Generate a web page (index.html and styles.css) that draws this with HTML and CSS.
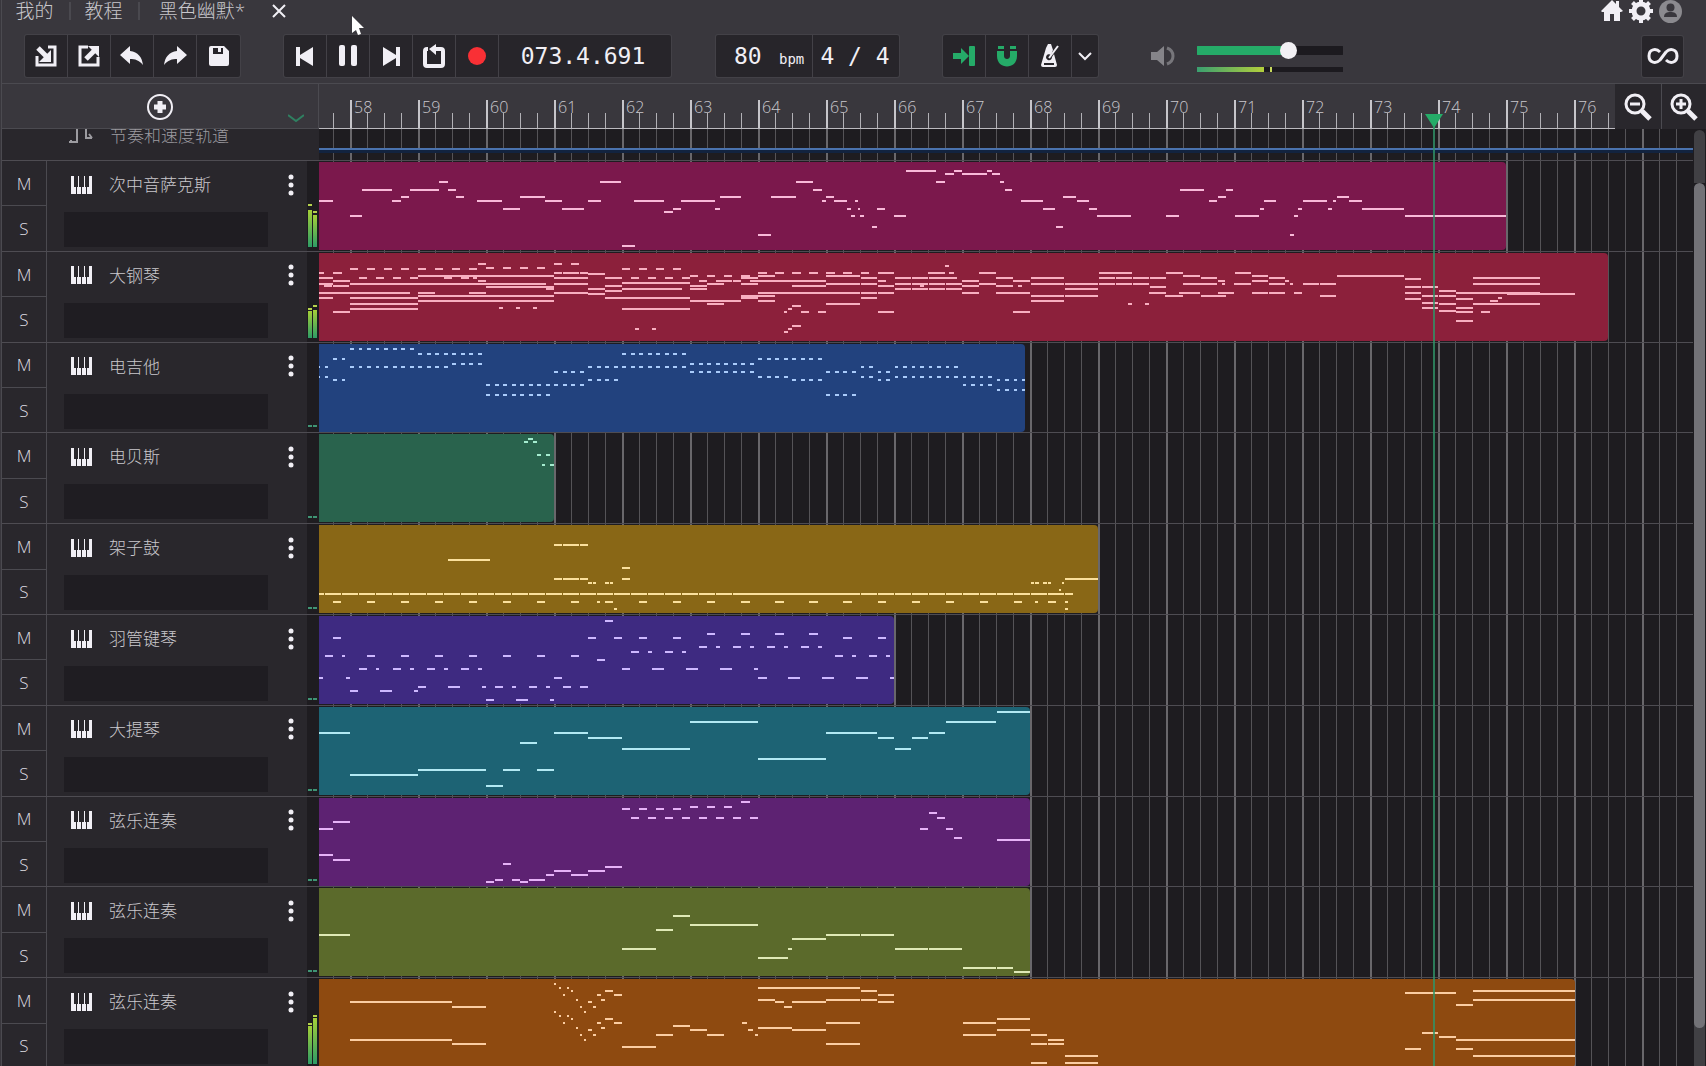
FILE: index.html
```html
<!DOCTYPE html>
<html lang="zh-CN">
<head>
<meta charset="utf-8">
<meta name="viewport" content="width=device-width, initial-scale=1">
<title>黑色幽默*</title>
<link rel="stylesheet" href="styles.css">
</head>
<body>
<header class="top">
  <nav class="tabs">
    <a class="tab" href="#mine">我的</a>
    <a class="tab" href="#learn">教程</a>
    <a class="tab tab-project" href="#project">黑色幽默*</a>
    <button class="close" type="button" aria-label="关闭">
      <svg width="14" height="14" viewBox="0 0 14 14"><path d="M1 1L13 13M13 1L1 13" class="line thin"/></svg>
    </button>
    <div class="account">
      <a class="plain" href="#home" aria-label="主页"><svg width="22" height="22" viewBox="0 0 22 22"><path class="fill" d="M11 0L15 4V1H18V7L22 11L20 12H19V21H13V14H9V21H3V12H1L0 11Z"/></svg></a>
      <a class="plain" href="#settings" aria-label="设置"><svg width="24" height="24" viewBox="0 0 24 24"><circle cx="12" cy="12" r="7" class="line gear"/><path class="line gear-teeth" d="M12 4V0M12 24V20M4 12H0M24 12H20M6 6L3.500 3.500M18 18L20.500 20.500M18 6L20.500 3.500M6 18L3.500 20.500"/></svg></a>
      <a class="plain" href="#me" aria-label="账户"><svg width="23" height="23" viewBox="0 0 23 23"><circle class="avatar-bg" cx="11.500" cy="11.500" r="11.500"/><circle class="avatar" cx="11.500" cy="7.500" r="4"/><path class="avatar" d="M5 17C5 13 8 12 11.500 12S18 13 18 17Z"/></svg></a>
    </div>
  </nav>

  <div class="toolbar">
    <div class="group files">
      <button type="button" aria-label="导入"><svg width="22" height="22" viewBox="0 0 22 22"><path class="line" d="M13 2H20V20H2V11"/><path class="line bold" d="M3 3L12 12"/><path class="fill" d="M16 5V17H4Z"/></svg></button>
      <button type="button" aria-label="导出"><svg width="22" height="22" viewBox="0 0 22 22"><path class="line" d="M10 2H2V20H20V12"/><path class="line bold" d="M8 14L16 6"/><path class="fill" d="M10 1H21V12Z"/></svg></button>
      <button type="button" aria-label="撤销"><svg width="24" height="20" viewBox="0 0 24 20"><path class="fill" d="M0 9L10 0V5C18 6 22 11 23 19C19 14 15 13 10 13V18Z"/></svg></button>
      <button type="button" aria-label="重做"><svg width="24" height="20" viewBox="0 0 24 20"><path class="fill" d="M24 9L14 0V5C6 6 2 11 1 19C5 14 9 13 14 13V18Z"/></svg></button>
      <button type="button" aria-label="保存"><svg width="20" height="20" viewBox="0 0 20 20"><path class="fill" fill-rule="evenodd" d="M2 0H15L20 5V18Q20 20 18 20H2Q0 20 0 18V2Q0 0 2 0ZM4 2V8H14V2H12V6H9V2Z"/></svg></button>
    </div>

    <div class="group transport">
      <button type="button" aria-label="回到开头"><svg width="18" height="19" viewBox="0 0 18 19"><path class="fill" d="M0 0H4V8L17 0V19L4 11V19H0Z"/></svg></button>
      <button type="button" aria-label="暂停"><svg width="18" height="22" viewBox="0 0 18 22"><rect class="fill" width="6" height="21" rx="2"/><rect class="fill" x="12" width="6" height="21" rx="2"/></svg></button>
      <button type="button" aria-label="跳到结尾"><svg width="18" height="19" viewBox="0 0 18 19"><path class="fill" d="M18 0H14V8L1 0V19L14 11V19H18Z"/></svg></button>
      <button type="button" aria-label="循环"><svg width="22" height="24" viewBox="0 0 22 24"><path class="line loop" d="M5 5H4Q2 5 2 7V20Q2 22 4 22H18Q20 22 20 20V7Q20 5 18 5H11"/><path class="fill" d="M6 5L13 0V11Z"/></svg></button>
      <button type="button" aria-label="录音"><svg width="20" height="20" viewBox="0 0 20 20"><circle class="record" cx="10" cy="10" r="9"/></svg></button>
      <output class="position">073.4.691</output>
    </div>

    <div class="group tempo">
      <label class="bpm"><input type="text" value="80"><span>bpm</span></label>
      <button class="meter-sig" type="button">4 / 4</button>
    </div>

    <div class="group snap">
      <button class="on" type="button" aria-label="自动滚动"><svg width="22" height="22" viewBox="0 0 22 22"><path class="fill" d="M0 8H8V3L16 11L8 19V14H0Z"/><rect class="fill" x="16" y="1" width="6" height="20" rx="1"/></svg></button>
      <button class="on" type="button" aria-label="吸附"><svg width="20" height="22" viewBox="0 0 20 22"><path class="fill" d="M1 1H7V4H1ZM13 1H19V4H13ZM0 6H7V11C7 15 13 15 13 11V6H20V11C20 25 0 25 0 11Z"/></svg></button>
      <button type="button" aria-label="节拍器"><svg width="20" height="24" viewBox="0 0 20 24"><path class="fill" fill-rule="evenodd" d="M8 0H11L13 6L11 11A3 3 0 1 0 12 13L14 10L17 21Q17 23 15 23H3Q1 23 1 21L6 4ZM4 19V21H14V19Z"/><path class="line thin" d="M9 14L18 2"/></svg></button>
      <button class="narrow" type="button" aria-label="更多"><svg width="14" height="9" viewBox="0 0 14 9"><path class="line thin" d="M1 1L7 7L13 1"/></svg></button>
    </div>

    <div class="volume">
      <svg width="24" height="22" viewBox="0 0 24 22"><path class="speaker" d="M0 7H6L13 1V21L6 15H0Z"/><path class="speaker-wave" d="M16 3C24 6 24 16 16 19"/></svg>
      <div class="volume-bars">
        <input type="range" min="0" max="100" value="64" aria-label="音量">
        <div class="master"><i></i><b></b></div>
      </div>
    </div>

    <button class="infinity" type="button" aria-label="循环模式"><svg width="32" height="16" viewBox="0 0 32 16"><path class="line infinity-line" d="M13 12C9 16 2 15 2 8C2 1 9 0 13 4M19 4C23 0 30 1 30 8C30 15 23 16 19 12M13 12L19 4"/></svg></button>
  </div>
</header>

<main class="workspace">
  <div class="ruler-row">
    <div class="ruler-head">
      <button class="add" type="button" aria-label="添加轨道"><svg width="26" height="26" viewBox="0 0 26 26"><circle class="line thin" cx="13" cy="13" r="12"/><path class="line bold" d="M13 7V19M7 13H19"/></svg></button>
      <button class="fold" type="button" aria-label="折叠"><svg width="16" height="9" viewBox="0 0 16 9"><path d="M0 1L8 7L16 1"/></svg></button>
    </div>
    <ol class="ruler" id="ruler"></ol>
    <div class="zoom">
      <button type="button" aria-label="缩小"><svg width="28" height="28" viewBox="0 0 28 28"><circle class="line" cx="11" cy="11" r="9"/><path class="line" d="M6 11H16"/><path class="line bold" d="M18 18L26 26"/></svg></button>
      <button type="button" aria-label="放大"><svg width="28" height="28" viewBox="0 0 28 28"><circle class="line" cx="11" cy="11" r="9"/><path class="line" d="M6 11H16M11 6V16"/><path class="line bold" d="M18 18L26 26"/></svg></button>
    </div>
  </div>

  <div class="scroller">
    <div class="tracks">
      <div class="tempo-row">
        <div class="tempo-head">
          <svg width="26" height="22" viewBox="0 0 26 22"><path d="M1 19H9V2M3 17V19M18 2V15H24M21 11L24 15"/></svg>
          <span>节奏和速度轨道</span>
        </div>
        <div class="tempo-lane"><div class="tempo-line"></div></div>
      </div>
      <div class="rows" id="rows"></div>
    </div>
    <div class="scrollbar"><div class="thumb"></div></div>
  </div>

  <div class="playhead"></div>
</main>

<svg class="cursor" width="13" height="19" viewBox="0 0 13 19"><path d="M0 0V17L4 14L6 19L9 18L7 12H12Z"/></svg>
<script src="app.js"></script>
</body>
</html>
```
FILE: styles.css
```css
* { box-sizing: border-box; }

:root {
  --bar: 68px;
  --first-bar: 31px;
  --head: 317px;
  --chrome: #39373d;
  --panel: #29272c;
  --dark: #1e1c20;
  --edge: #4b4a50;
  --ink: #f1eff5;
  --green: #25ab68;
}

body {
  margin: 0;
  height: 100vh;
  padding-left: 1px;
  display: flex;
  flex-direction: column;
  overflow: hidden;
  background: var(--chrome);
  color: #c9c8cd;
  font-family: "Open Sans", "Noto Sans CJK SC", sans-serif;
  font-weight: 300;
}

button, input, output { font: inherit; color: inherit; }
button { border: 0; padding: 0; background: none; display: flex; align-items: center; justify-content: center; }
svg { display: block; flex: none; }

.fill { fill: currentColor; }
.line { fill: none; stroke: currentColor; stroke-width: 3; }
.line.thin { stroke-width: 2; }
.line.bold { stroke-width: 5; }
.line.gear { stroke-width: 5; }
.line.gear-teeth { stroke-width: 4; }
.line.loop { stroke-width: 4; }
.line.infinity-line { stroke-width: 3; stroke-linejoin: round; }
.record { fill: #f93035; }
.avatar-bg { fill: #8b8a8f; }
.avatar { fill: var(--chrome); }

/* Top bar */
.top { border-left: 1px solid var(--edge); border-bottom: 1px solid var(--edge); height: 84px; flex: none; }

.tabs { display: flex; align-items: center; height: 22px; font-size: 19px; line-height: 22px; }
.tab { color: inherit; text-decoration: none; width: 69px; text-align: center; }
.tab:not(.tab-project) { border-right: 2px solid #4a494f; line-height: 18px; padding-right: 2px; }
.tab-project { width: 124px; }
.close { width: 30px; height: 22px; color: var(--ink); }
.account { margin-left: auto; margin-right: 24px; display: flex; align-items: center; gap: 6px; height: 22px; color: var(--ink); }
.plain { color: inherit; }

.toolbar { display: flex; align-items: center; margin-top: 13px; padding: 0 23px; height: 42px; color: var(--ink); }
.group { display: flex; background: #27252a; border-radius: 2px; box-shadow: 0 0 0 1px #434147; }
.group > * { height: 42px; width: 43px; border-right: 1px solid #434147; }
.group > :last-child { border-right: 0; }
.transport { margin-left: 44px; }
.group .position { width: 172px; padding-right: 4px; text-align: center; }
.position, .bpm, .meter-sig { font-family: "DejaVu Sans Mono", monospace; font-size: 23px; line-height: 42px; font-weight: 400; }
.tempo { margin-left: 45px; }
.group .bpm { width: 97px; display: flex; padding-left: 18px; }
.bpm input { width: 36px; height: 42px; padding: 0; border: 0; background: none; outline: 0; }
.bpm span { font-size: 14px; line-height: 48px; margin-left: 9px; }
.group .meter-sig { width: 86px; padding-right: 2px; }
.snap { margin-left: 44px; }
.group .on { color: var(--green); }
.group .narrow { width: 26px; }

.volume { display: flex; align-items: center; gap: 22px; margin-left: 53px; }
.speaker { fill: #858489; }
.speaker-wave { fill: none; stroke: #77767b; stroke-width: 3; }
.volume-bars { width: 146px; display: flex; flex-direction: column; gap: 8px; padding-top: 2px; }
.volume input {
  appearance: none;
  margin: 0;
  width: 100%;
  height: 17px;
  background: linear-gradient(to right, #25ab68 63%, #1c1a1f 63%) center / 100% 9px no-repeat;
  border-radius: 5px;
}
.volume input::-webkit-slider-thumb { appearance: none; width: 17px; height: 17px; border-radius: 50%; background: #f2f0f4; }
.master { height: 5px; background: #1c1a1f; display: flex; gap: 6px; }
.master i { width: 46%; background: linear-gradient(to right, #3a9f70, #b3cf3c); }
.master b { width: 2px; background: #c6d85c; }
.infinity { margin-left: auto; width: 41px; height: 41px; background: #27252a; border-radius: 2px; box-shadow: 0 0 0 1px #434147; }

/* Ruler */
.workspace { flex: 1; min-height: 0; display: flex; flex-direction: column; position: relative; border-left: 1px solid var(--edge); }
.ruler-row { display: flex; height: 45px; flex: none; }
.ruler-head { width: var(--head); flex: none; display: flex; align-items: center; border-right: 1px solid var(--edge); border-bottom: 1px solid var(--edge); padding: 2px 14px 0 145px; justify-content: space-between; }
.add { color: var(--ink); }
.fold { align-self: flex-end; height: 20px; }
.fold path { fill: none; stroke: #2f8061; stroke-width: 2; }
.ruler { flex: 1; min-width: 0; margin: 0; padding: 0; list-style: none; display: flex; overflow: hidden; border-bottom: 1px solid #bbbabf; }
.ruler li {
  flex: none;
  width: var(--bar);
  padding: 14px 0 0 4px;
  font-size: 16px;
  line-height: 18px;
  background:
    linear-gradient(#c6c5ca, #c6c5ca) 0 100% / 2px 28px no-repeat,
    linear-gradient(#b2b1b6, #b2b1b6) 17px 100% / 1px 15px no-repeat,
    linear-gradient(#b2b1b6, #b2b1b6) 34px 100% / 1px 15px no-repeat,
    linear-gradient(#b2b1b6, #b2b1b6) 51px 100% / 1px 15px no-repeat;
}
.ruler li:first-child { margin-left: calc(var(--first-bar) - var(--bar)); }
.zoom { display: flex; background: var(--panel); }
.zoom button { width: 46px; color: var(--ink); }
.zoom button:last-child { width: 45px; border-left: 1px solid var(--edge); }

/* Track list */
.scroller { flex: 1; min-height: 0; overflow: hidden; display: flex; }
.tracks { flex: 1; min-width: 0; }
.tempo-row { display: flex; height: 31px; }
.tempo-head { width: var(--head); flex: none; height: 52px; margin-top: -21px; display: flex; align-items: center; gap: 16px; padding-left: 66px; background: var(--panel); color: #9c9ba0; font-size: 17px; clip-path: inset(21px 0 0 0); }
.tempo-head path { fill: none; stroke: currentColor; stroke-width: 2; }
.tempo-lane, .lane {
  flex: 1;
  min-width: 0;
  background-color: var(--dark);
  background-image:
    linear-gradient(to right, #69676b 2px, transparent 2px),
    linear-gradient(to right, transparent 17px, #555357 17px, #555357 18px, transparent 18px, transparent 34px, #555357 34px, #555357 35px, transparent 35px, transparent 51px, #555357 51px, #555357 52px, transparent 52px);
  background-size: var(--bar) 100%;
  background-position-x: var(--first-bar);
}
.tempo-lane { padding-top: 19px; }
.tempo-line { height: 5px; background: #12233f; border-top: 2px solid #4a72ad; }

.rows { display: grid; grid-template-rows: repeat(10, minmax(0, 1fr)); height: 908px; }
.row { display: flex; min-height: 0; border-top: 1px solid #4e4c52; }
.head { width: var(--head); flex: none; display: flex; background: var(--panel); }
.ms { width: 45px; display: flex; flex-direction: column; border-right: 1px solid var(--edge); font-size: 17px; color: #dddce1; }
.ms button { flex: 1; }
.ms button + button { border-top: 1px solid var(--edge); }
.info { flex: 1; padding: 12px 13px 0 17px; }
.title { display: flex; align-items: center; height: 23px; padding-left: 7px; font-size: 17px; line-height: 23px; }
.title .name { margin-left: 17px; flex: 1; }
.title svg { color: var(--ink); }
.controls { height: 35px; width: 204px; margin-top: 16px; background: #1f1d22; }
.level { width: 12px; display: flex; align-items: flex-end; gap: 1px; padding: 0 2px 4px 1px; background: var(--dark); }
.level span { flex: 1; display: flex; flex-direction: column; justify-content: flex-end; }
.level i { background: linear-gradient(to top, #2e9c66, #a4cf38); }
.level b { height: 2px; margin-bottom: 1px; background: #3f9474; }
.level .peak b { background: #b5d24c; }

.lane { padding-top: 1px; overflow: hidden; }
.clip { height: 88px; border-radius: 0 4px 4px 0; overflow: hidden; }

.scrollbar { width: 13px; padding: 1px 1px 0; background: var(--dark); }
.scrollbar::before { content: ""; display: block; height: 53px; background: #414044; border-radius: 6px 6px 0 0; }
.thumb { height: 845px; background: #737277; border-radius: 6px; box-shadow: 0 44px 0 #414044; }

/* Playback position, drawn over ruler and clips */
.playhead { position: absolute; left: 1431px; top: 43px; bottom: 0; width: 2px; background: rgba(48, 148, 104, .8); pointer-events: none; }
.playhead::before { content: ""; position: absolute; left: -8px; top: -13px; border: 9px solid transparent; border-top: 14px solid var(--green); border-bottom: 0; }
.cursor { position: absolute; left: 352px; top: 16px; }
.cursor path { fill: #fff; }
```
FILE: app.js
```js
// Sixteenth-note width in the current zoom, and the lane offset of bar 58.
const STEP = 4.253;
const ORIGIN = 32;

// Notes: "y: start+length[xCount/step] ...", time in sixteenths from bar 58.
const tracks = [
  { name: "次中音萨克斯", color: "#7b184c", ink: "#f8b9d8", width: 1187, level: [[37, 4], [32, 2]], notes: `
39: -7.5+3.2 9.7+2 29.6+6 45.7+4 55.8+2.9 66.6+7 77.7+7.9 110.7+.9 113.6+3 118.6+.5 157.6+5 170.6+3 201.8+1.9 214.7+2.9 223.8+5.8 230.8+.9 234.7+2.9
54: -.3+3 117.6+1 119.6+1 127.6+3 175.5+8 191.7+2.9 207.8+5.8 221.7+1 247.8+23.8
28: 2.7+7 13.8+7 22.8+2 108.7+2 153.7+1.8 194.9+5.7 205.8+1.7
20: 20.7+2 58.6+5 104.7+4 137.6+2 152.6+1
35: 11.8+1.9 24.7+1.8 39.7+5.9 86.7+5 98.7+5.9 111.6+2 167.5+3 203.8+1.9 231.8+2.8
47: 35.7+4 49.7+5 75.8+1.9 85.7+1 116.6+1 119.1+.5 123.6+2 162.6+3 173.6+1.9 213.8+.9 222.6+1 229.7+.9 237.7+9.8
50: 73.6+2
73: 95.7+3 220.7+1
84: 63.7+3
65: 122.6+1 165.7+1.8
9: 130.6+7 141.7+1.9 149.6+1
12: 139.7+2 143.7+5.9 150.6+2` },
  { name: "大钢琴", color: "#8c203b", ink: "#f8afc0", width: 1289, level: [[27, 1], [28, 3]], notes: `
11: 29.8+1.9 47.8+1.9x2/4
13: 139.7+1
15: 31.8+1.9x4/4
16: -.2+1.9x4/4 15.8+1.9x4/4 63.8+1.9x4/4
20: -7.5+1.2 -4.2+2 47.8+1.9x4/2 95.8+1.9x7/4 123.8+3.9 135.7+3.9 140.7+1 147.7+3.9 175.8+7.9 191.7+3.9 207.8+3.8
21: 55.8+3.9
23: 15.8+3.9x8/4 79.8+1.9x4/4 95.8+3.9 111.8+3.9x2/4 195.7+3.9 211.8+3.8 231.8+15.8
25: -7.5+3.2 1.8+1.9x4/4 21.8+1.9x2/4 28.8+.8 47.8+3.9x2/4 59.8+3.9 65.8+1.9x4/4 91.8+3.9 119.8+3.9 127.8+3.9x3/4 139.7+2.8 151.7+3.9 159.8+7.8 175.8+3.9x4/4 199.8+3.9 215.8+3.9 263.8+15.8
26: 247.8+3.9
28: -4.2+3.9 29.8+1.9 81.8+1.9 85.8+1.9x3/2 93.8+1.9 95.8+3.9x4/4 123.8+1.9 143.7+3.9 155.7+3.9 203.8+1.8 211.8+3.8 219.7+.9
30: 63.8+3.9x4/4
31: -7.5+3.2 -.2+3.9x4/4 15.8+3.9x7/4 43.8+2 47.8+3.9x2/4 83.8+3.9 91.8+3.9 111.8+3.9x3/4 127.8+3.9x4/4 147.7+3.9 159.8+7.8x2/8 175.8+3.9x3/4 195.7+3.9x2/4 204.7+.9 207.7+3.9 215.8+3.9 220.7+.9 223.8+3.9x2/4 263.8+15.8
33: -6.3+1.9x3/2 59.8+3.9 79.8+3.9 103.8+3.9x2/4 123.8+3.9 133.8+.9 143.7+3.9 151.7+3.9 156.8+.9
34: 31.8+3.9x4/4 187.8+3.9 247.8+3.9x2/4
36: 45.8+1.9 55.8+3.9 63.8+3.9x3/4 75.8+2 79.8+3.9 127.8+3.9x4/4 167.8+7.8
38: 59.8+3.9 255.8+3.9
40: -7.5+3.2 -4.2+3.9 -.2+3.9x3/4 11.8+2 15.8+3.9 27.8+3.9 47.8+3.9x2/4 95.8+3.9x8/4 143.7+3.9 151.7+3.9x2/4 187.7+3.9 194.8+4.8 203.8+3.8 211.8+3.9x2/4 221.8+1.8 247.8+3.9 259.8+3.9 263.8+15.8
41: 55.8+3.9 271.7+16
43: 15.8+3.9x8/4 91.8+3.9x2/4 159.8+7.8x2/8 191.5+4.1 199.8+5.9 227.8+3.9 251.8+3.9x2/4
45: -7.5+3.2 -.2+3.9x4/4 59.8+3.9x5/4 91.8+3.9 119.8+3.9 269.6+1
46: 247.8+3.9 259.8+3.9
48: 15.8+3.9x8/4 79.8+3.9x3/4 95.8+3.9 159.8+7.8 267.8+1.8
50: 251.8+3.9
51: -.2+3.9x4/4 83.8+3.9 111.8+3.9x2/4 182.7+.9 186.7+.9 255.8+3.9 263.8+15.8
53: 103.8+1.9
55: 34.8+.9x3/4 251.8+3.9 259.8+3.9
56: -.2+3.9x4/4 63.8+3.9x4/4 102.8+.9
58: 255.8+3.9
59: -4.2+3.9 101.8+.8 105.8+1.9x2/4 123.8+3.9 155.7+3.9 259.8+3.9 265.8+1.9
68: 259.8+3.9
73: 103.8+1.9
76: 66.7+1x2/4 102.8+.9
79: 101.8+.9` },
  { name: "电吉他", color: "#22427e", ink: "#a9cbfb", width: 706, notes: `
5: -.2+.9x8/2
10: 15.8+.9x8/2 63.8+.9x8/2
15: -4.2+.9x2/2 95.8+.9x8/2
20: 23.8+.9x4/2 79.8+.9x8/2
23: -7.5+.3 -6.2+.9 -.2+.9x12/2 55.8+.9x12/2 119.8+.9x2/2 127.8+.9x8/2
28: 47.8+.9x4/2 79.8+.9x8/2 111.8+.9x4/2 123.8+.9x2/2
33: -7.5+.3 -6.2+.9 95.8+.9x4/2 119.8+.9x2/2 127.8+.9x12/2
36: -4.2+.9x2/2 55.8+.9x4/2 103.8+.9x4/2 123.8+.9x2/2 151.8+.9x4/2
41: 31.8+.9x12/2 143.8+.9x4/2
46: 151.8+.9x4/2
51: 31.8+.9x8/2 111.8+.9x4/2` },
  { name: "电贝斯", color: "#29634d", ink: "#a5ecd0", width: 235, notes: `
5: 41.7+1
8: 40.7+1 42.7+1
21: 43.8+.9 45.8+.9
31: 44.8+.9 46.8+.9` },
  { name: "架子鼓", color: "#896716", ink: "#fbe09c", width: 779, notes: `
20: 47.8+1.9x4/2
35: 22.8+1.9x5/2
43: 63.8+1.9
54: 47.8+1.9x4/2 63.8+1.9 167.8+7.8
58: 55.8+.9x2/1 59.8+.9x2/1 159.8+.9x2/1 162.8+.9x2/1 167.2+.4
65: 166.4+.6
69: -7.5+1.2 -6.2+1.9x88/2
77: -4.2+1.9x8/8 57.8+.7 59.8+1.9 67.8+1.9x12/8 160.8+.8 163.8+1.9 167.8+.9
84: 61.8+.8 167.8+.9` },
  { name: "羽管键琴", color: "#3e2a81", ink: "#cdb8ff", width: 575, notes: `
5: 59.8+1.9
18: 83.8+1.9x4/8
22: -4.2+1.9 55.8+1.9 61.8+1.9 67.8+1.9x2/8 115.8+1.9x2/8
31: 81.8+1.9x4/8 85.8+.9x4/8
36: 65.8+1.9x2/8 69.8+.9x2/8
40: -6.2+1.9 -2.2+.9 3.8+1.9x7/8 113.8+1.9x2/8 117.8+.9x2/8
44: 57.8+1.9
53: 1.8+1.9x4/8 5.8+.9x4/8 63.8+1.9 70.8+2.8x3/8 94.8+.9
62: -7.5+1 -1.2+.9 47.8+1.9 95.8+1.9 102.8+2.8x3/8 126.8+.9
71: 15.8+1.9 22.8+2.8 30.8+.9 33.8+1.9x3/8 37.8+.9x2/8 53.8+1.9
75: -.2+1.9 6.8+2.8 14.8+.9
84: 31.8+1.9 38.8+2.8 46.8+.9` },
  { name: "大提琴", color: "#1d6374", ink: "#b2e9f3", width: 711, notes: `
5: 151.8+7.9
15: 79.8+15.9 139.8+11.9
26: -7.5+7.2 47.8+7.9 111.8+11.8 135.9+3.8
31: 55.8+7.9 123.8+3.9 131.8+3.9
36: 39.8+3.9
42: 63.8+15.9 127.8+3.9
52: 95.8+15.9
63: 15.8+15.9 35.8+3.9 43.8+3.9
68: -.2+15.9
79: 31.8+3.9` },
  { name: "弦乐连奏", color: "#5d2272", ink: "#e6b2f7", width: 711, notes: `
4: 91.8+1.9
9: 79.8+1.9x3/4
11: 63.8+1.9x4/4
15: 135.8+1.9
20: 65.8+1.9x8/4 137.8+1.9
24: -4.2+3.9
31: -7.5+3.2 133.9+1.8 139.8+1.8
40: 141.8+1.9
42: 151.8+7.9
57: -7.5+3.2
62: -4.2+3.9
66: 35.8+1.9
69: 59.8+3.9
73: 47.8+3.9 55.8+3.9
77: 45.8+1.9 51.8+3.9
82: 33.8+1.9 37.8+1.9 41.8+1.9x2/2
84: 31.8+1.9 39.8+1.9` },
  { name: "弦乐连奏", color: "#5b6a2b", ink: "#dfe9b6", width: 711, notes: `
28: 75.8+3.9
37: 79.8+7.9x2/8
42: 71.8+3.9
47: -7.5+7.2 111.8+7.9x2/8
51: 103.8+7.9
61: 63.8+7.9 102.8+.9 127.8+7.9x2/8
70: 95.8+6.9
80: 143.8+7.9 151.8+3.9
84: 155.8+3.9` },
  { name: "弦乐连奏", color: "#8e4a10", ink: "#fbcda2", width: 1256, level: [[38, 1], [46, 1]], notes: `
5: 47.8+.5
9: 48.8+.5 50.8+.5 95.8+15.9 111.8+7.9
12: 51.8+.5 59.8+1.9 119.8+3.9 263.8+23.9
14: 247.8+11.9
16: 49.8+.5 57.8+.9 61.8+1.9 123.8+3.9
21: 52.8+.5 58.8+.9 95.8+3.9 111.8+7.9 119.8+3.9 263.8+23.9
23: -.2+23.9 55.8+.9 99.8+1.9 103.8+7.9 123.8+3.9
26: 259.8+3.9
28: 23.8+7.9 53.8+.5 56.8+.9 101.8+1.9
33: 47.8+.5 54.8+.5
37: 48.8+.5 50.8+.5
40: 51.8+.5 59.8+1.9 151.8+7.9
44: 49.8+.5 57.8+.9 61.8+1.9 91.9+1.3 111.8+7.9 143.8+7.9
47: 75.8+3.9
49: 52.8+.5 58.8+.9 95.8+7.9
51: 55.8+.9 79.8+3.9 93.4+1.2 103.8+7.9 151.8+7.9
54: 251.8+3.9
56: 53.8+.5 56.8+.9 71.8+3.9 83.8+3.9 94.9+.9 143.8+7.9 159.8+3.9
58: 255.8+3.9
61: -.2+23.9 54.8+.5 163.8+3.9 259.8+3.9 263.8+23.9
65: 23.8+7.9 111.8+7.9 159.8+3.9x2/4
68: 63.8+7.9
70: 247.8+3.9 259.8+3.9
77: 167.8+7.9 263.8+23.9
84: 159.8+3.9 167.8+7.9` }
];

function noteRects(source) {
  let out = "";
  for (const line of source.trim().split("\n")) {
    const [y, list] = line.split(": ");
    for (const item of list.split(" ")) {
      const [, start, length, count = 1, step = 0] = item.match(/^(-?[\d.]+)\+([\d.]+)(?:x(\d+)\/(\d+))?$/);
      for (let i = 0; i < count; i++) {
        const t = Number(start) + i * step;
        const x = Math.max(0, Math.round(ORIGIN + t * STEP));
        const end = Math.round(ORIGIN + (t + Number(length)) * STEP);
        out += `<rect x="${x}" y="${y - 1}" width="${Math.max(1, end - x)}" height="2"/>`;
      }
    }
  }
  return out;
}

const KEYS = '<svg width="21" height="18" viewBox="0 0 21 18"><path class="fill" d="M0 0H3V11H5V18H0ZM6 18V11H7V0H8V11H10V18ZM11 18V11H13V0H14V11H15V18ZM16 18V11H18V0H21V18Z"/></svg>';
const DOTS = '<svg width="6" height="22" viewBox="0 0 6 22"><g class="fill"><circle cx="3" cy="3" r="2.500"/><circle cx="3" cy="11" r="2.500"/><circle cx="3" cy="19" r="2.500"/></g></svg>';

function level(values) {
  if (!values) return "<span><b></b></span><span><b></b></span>";
  return values.map(([height, gap]) =>
    `<span class="peak"><b style="margin-bottom:${gap}px"></b><i style="height:${height}px"></i></span>`).join("");
}

document.getElementById("rows").innerHTML = tracks.map(t => `
  <section class="row">
    <div class="head">
      <div class="ms"><button type="button">M</button><button type="button">S</button></div>
      <div class="info">
        <div class="title">${KEYS}<span class="name">${t.name}</span><button type="button" aria-label="更多">${DOTS}</button></div>
        <div class="controls"></div>
      </div>
      <div class="level">${level(t.level)}</div>
    </div>
    <div class="lane">
      <div class="clip" style="width:${t.width}px;background:${t.color}">
        <svg width="${t.width}" height="88" fill="${t.ink}">${noteRects(t.notes)}</svg>
      </div>
    </div>
  </section>`).join("");

// The bar left of 58 only contributes its ticks; its number is scrolled out.
let bars = "<li></li>";
for (let n = 58; n <= 76; n++) bars += `<li>${n}</li>`;
document.getElementById("ruler").innerHTML = bars;
```
